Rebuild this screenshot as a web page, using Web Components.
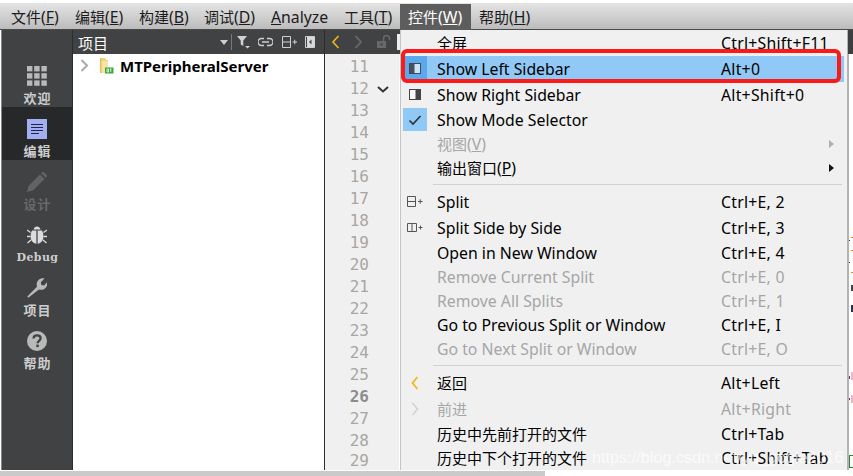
<!DOCTYPE html>
<html lang="zh"><head><meta charset="utf-8"><title>Qt Creator</title>
<style>
html,body{margin:0;padding:0;background:#fff;overflow:hidden}
body{width:853px;height:476px;font-family:"Noto Sans","Noto Sans CJK SC",sans-serif}
svg{display:block}
.c{font-size:15px}
qt-top .l{font-size:15.8px}
</style></head><body>
<qt-app>
  <qt-menubar slot="bar">
    <qt-top w="64">文件<span class="l">(<u>F</u>)</span></qt-top>
    <qt-top w="64">编辑<span class="l">(<u>E</u>)</span></qt-top>
    <qt-top w="65">构建<span class="l">(<u>B</u>)</span></qt-top>
    <qt-top w="67">调试<span class="l">(<u>D</u>)</span></qt-top>
    <qt-top w="73"><span class="l"><u>A</u>nalyze</span></qt-top>
    <qt-top w="64">工具<span class="l">(<u>T</u>)</span></qt-top>
    <qt-top w="71" active>控件<span class="l">(<u>W</u>)</span></qt-top>
    <qt-top w="64">帮助<span class="l">(<u>H</u>)</span></qt-top>
  </qt-menubar>
  <qt-modebar slot="mode">
    <qt-mode label="欢迎"><svg viewBox="0 0 20 20" width="20" height="20" fill="#b9b9b9"><rect x="0" y="0" width="5.4" height="5.4"/><rect x="7.2" y="0" width="5.4" height="5.4"/><rect x="14.4" y="0" width="5.4" height="5.4"/><rect x="0" y="7.2" width="5.4" height="5.4"/><rect x="7.2" y="7.2" width="5.4" height="5.4"/><rect x="14.4" y="7.2" width="5.4" height="5.4"/><rect x="0" y="14.4" width="5.4" height="5.4"/><rect x="7.2" y="14.4" width="5.4" height="5.4"/><rect x="14.4" y="14.4" width="5.4" height="5.4"/></svg></qt-mode>
    <qt-mode label="编辑" selected><svg viewBox="0 0 20 20" width="20" height="20"><rect width="20" height="20" fill="#a3aff0"/><path d="M4 5.5h12M4 8.5h12M4 11.5h12M4 14.5h8" stroke="#1c2550" stroke-width="1.2" fill="none"/></svg></qt-mode>
    <qt-mode label="设计" disabled><svg viewBox="0 0 20 20" width="20" height="20"><path d="M0 20l1.5-6L13 2.5l4.5 4.5L6 18.5z" fill="#626365"/><path d="M14.2 1.3l1-1a1.2 1.2 0 0 1 1.7 0l2.8 2.8a1.2 1.2 0 0 1 0 1.7l-1 1z" fill="#626365"/></svg></qt-mode>
    <qt-mode label="Debug" mono><svg viewBox="0 0 20 20" width="20" height="20" fill="#dcdcdc"><path d="M6.5 4.5C7 2.6 8.4 1.5 10 1.5s3 1.1 3.5 3z"/><path d="M9.4 5.5v13.2C6 18.300 3.600 15.500 3.600 11.500c0-2.500.5-4.700 1.500-6z"/><path d="M10.600 5.500v13.200c3.400-.4 5.800-3.200 5.800-7.200 0-2.500-.5-4.700-1.500-6z"/><path d="M0 5l3.500 2.500M20 5l-3.500 2.500M0 11.500h3.500M20 11.500h-3.500M0.500 18l3.500-3M19.500 18l-3.500-3" stroke="#dcdcdc" stroke-width="1.300" fill="none"/></svg></qt-mode>
    <qt-mode label="项目"><svg viewBox="0 0 20 20" width="20" height="20"><path d="M1.300 19.800L.3 18.600 10 8.700c-.8-2.500-.2-5 1.500-6.700 1.500-1.500 3.800-2.200 6-1.600l-3.700 3.800.6 2.700 2.700.6L20.200 3.900c.5 2.200-.1 4.400-1.700 6-1.700 1.700-4.200 2.300-6.600 1.500z" fill="#b9b9b9"/></svg></qt-mode>
    <qt-mode label="帮助"><svg viewBox="0 0 20 20" width="20" height="20"><circle cx="10" cy="10" r="10" fill="#b9b9b9"/><path d="M6.500 7.600c0-2 1.500-3.300 3.600-3.300s3.500 1.200 3.500 3c0 2.600-3 2.500-3 5" fill="none" stroke="#404244" stroke-width="2.300"/><rect x="9.300" y="13.600" width="2.500" height="2.500" fill="#404244"/></svg></qt-mode>
  </qt-modebar>
  <qt-toolbar slot="tools"></qt-toolbar>
  <qt-tree slot="tree"></qt-tree>
  <qt-gutter slot="gutter"></qt-gutter>
  <qt-menu slot="menu">
    <qt-item key="Ctrl+Shift+F11" h="25"><span class="c">全屏</span></qt-item>
    <qt-item key="Alt+0" h="26" hot><svg slot="icon" viewBox="0 0 12 11" width="12" height="11"><rect x=".5" y=".5" width="11" height="10" fill="#cfe3f6" stroke="#3f4a55" stroke-width="1"/><rect x="1" y="1" width="4.500" height="9" fill="#46525e"/></svg>Show Left Sidebar</qt-item>
    <qt-item key="Alt+Shift+0" h="26"><svg slot="icon" viewBox="0 0 12 11" width="12" height="11"><rect x=".5" y=".5" width="11" height="10" fill="#f8f8f8" stroke="#444" stroke-width="1"/><rect x="6.500" y="1" width="4.500" height="9" fill="#444"/></svg>Show Right Sidebar</qt-item>
    <qt-item h="24" checked><svg slot="icon" viewBox="0 0 14 12" width="14" height="12"><path d="M1.500 6.500l3.500 3.500 7.500-8" fill="none" stroke="#333" stroke-width="1.700"/></svg>Show Mode Selector</qt-item>
    <qt-item h="24" disabled sub><span class="c">视图</span>(<u>V</u>)</qt-item>
    <qt-item h="24" sub><span class="c">输出窗口</span>(<u>P</u>)</qt-item>
    <qt-sep></qt-sep>
    <qt-item key="Ctrl+E, 2" h="26"><svg slot="icon" viewBox="0 0 16 12" width="16" height="12"><path d="M.5 .5h8v10h-8zM.5 5.500h8M11 5.500h4.500M13.250 3.300v4.500" fill="none" stroke="#555" stroke-width="1"/></svg>Split</qt-item>
    <qt-item key="Ctrl+E, 3" h="26"><svg slot="icon" viewBox="0 0 16 12" width="16" height="12"><path d="M.5 1.500h9v8h-9zM5 1.500v8M11.500 5.500h4M13.500 3.500v4" fill="none" stroke="#555" stroke-width="1"/></svg>Split Side by Side</qt-item>
    <qt-item key="Ctrl+E, 4" h="24">Open in New Window</qt-item>
    <qt-item key="Ctrl+E, 0" h="24" disabled>Remove Current Split</qt-item>
    <qt-item key="Ctrl+E, 1" h="24" disabled>Remove All Splits</qt-item>
    <qt-item key="Ctrl+E, I" h="24">Go to Previous Split or Window</qt-item>
    <qt-item key="Ctrl+E, O" h="24" disabled>Go to Next Split or Window</qt-item>
    <qt-sep></qt-sep>
    <qt-item key="Alt+Left" h="26"><svg slot="icon" viewBox="0 0 8 14" width="8" height="14"><path d="M6.500 1L1.500 7l5 6" fill="none" stroke="#f2b71a" stroke-width="1.800"/></svg><span class="c">返回</span></qt-item>
    <qt-item key="Alt+Right" h="26" disabled><svg slot="icon" viewBox="0 0 8 14" width="8" height="14"><path d="M1.500 1l5 6-5 6" fill="none" stroke="#d2d2d2" stroke-width="1.500"/></svg><span class="c">前进</span></qt-item>
    <qt-item key="Ctrl+Tab" h="24"><span class="c">历史中先前打开的文件</span></qt-item>
    <qt-item key="Ctrl+Shift+Tab" h="24"><span class="c">历史中下个打开的文件</span></qt-item>
  </qt-menu>
  <qt-edge slot="edge"></qt-edge>
  <qt-mark slot="mark">https://blog.csdn.net/yq_gogle2016</qt-mark>
</qt-app>
<script>
function def(name,html,init){
  customElements.define(name,class extends HTMLElement{
    constructor(){super();this.attachShadow({mode:'open'}).innerHTML=html;if(init)init(this,this.shadowRoot);}
  });
}
const CJK='"Noto Sans","Noto Sans CJK SC",sans-serif';

def('qt-app',`<style>
:host{display:block;position:relative;width:853px;height:476px;overflow:hidden;background:#fff;font-family:${CJK}}
.col{display:flex;flex-direction:column;height:476px;padding-top:3px;box-sizing:border-box}
.main{display:flex;height:440px}
.right{display:flex;flex-direction:column;width:780px}
.body{display:flex;height:416px}
.foot{margin-top:1px;height:5px;width:545px;background:#cacaca}
.menu{position:absolute;left:400px;top:30px}
.edge{position:absolute;left:847px;top:30px}
.mark{position:absolute;left:592px;top:448px}
</style>
<div class="col">
  <slot name="bar"></slot>
  <div class="main"><slot name="mode"></slot>
    <div class="right"><slot name="tools"></slot>
      <div class="body"><slot name="tree"></slot><slot name="gutter"></slot></div>
    </div>
  </div>
  <div class="foot"></div>
</div>
<div class="edge"><slot name="edge"></slot></div>
<div class="menu"><slot name="menu"></slot></div>
<div class="mark"><slot name="mark"></slot></div>`);

def('qt-menubar',`<style>
:host{display:flex;height:27px;box-sizing:border-box;padding:1px 0 0 3px;background:linear-gradient(#e4e4e4,#bcbcbc);border-bottom:1px solid #4a4a4a}
</style><slot></slot>`);

def('qt-top',`<style>
:host{display:block;height:26px;box-sizing:border-box;padding:0 0 0 8px;font-size:15px;line-height:26px;color:#1c1c1c;white-space:nowrap;flex:none}
:host([active]){background:#5d5d5d;color:#fff}
</style><slot></slot>`,(el)=>{queueMicrotask(()=>{el.style.width=el.getAttribute('w')+'px'})});

def('qt-modebar',`<style>
:host{display:flex;flex-direction:column;width:72px;margin-left:1px;box-sizing:border-box;background:#404244;border-left:1px solid #85878a;border-right:1px solid #2c2c2c;padding-top:24px}
</style><slot></slot>`);

def('qt-mode',`<style>
:host{display:flex;flex-direction:column;align-items:center;height:53px;box-sizing:border-box;padding-top:12px;color:#cdcdcd}
:host([selected]){background:#27282a}
:host([disabled]){color:#68696b}
.l{font:700 13px/14px "Noto Sans CJK SC",sans-serif;margin-top:5px;letter-spacing:1px;margin-right:-1px}
:host([mono]) .l{font:700 11px/14px "DejaVu Serif",serif;letter-spacing:.4px;margin-top:6px}
</style><slot></slot><div class="l"></div>`,(el,s)=>{
  queueMicrotask(()=>{s.querySelector('.l').textContent=el.getAttribute('label')});
});

def('qt-toolbar',`<style>
:host{display:flex;height:24px;background:#404244;color:#fff}
.p{display:flex;align-items:center;width:252px;box-sizing:border-box;padding-left:5px;font-size:15px;border-right:1px solid #2c2c2c}
.t{flex:1}
.e{display:flex;align-items:center;flex:1;position:relative}
.tri{width:0;height:0;border:4.500px solid transparent;border-top:5px solid #cfcfcf;border-bottom:0;margin-right:3px}
.div{width:1px;height:16px;background:#77797b;margin-right:5px}
svg{display:block;flex:none}
.w{width:3px;height:16px;background:#eee;margin-left:6px}
</style>
<div class="p"><span class="t">项目</span><span class="tri"></span><span class="div"></span>
<svg width="13" height="14" viewBox="0 0 13 14" style="margin-right:8px"><path d="M0 1h10L6.300 5.500V11L3.700 9.500V5.500z" fill="#d0d0d0"/><path d="M8 11h5l-2.500 2.500z" fill="#d0d0d0"/></svg>
<svg width="15" height="10" viewBox="0 0 15 10" style="margin-right:9px"><path d="M6 1.500H3.500a3 3 0 0 0 0 7H6M9 1.500h2.500a3 3 0 0 1 0 7H9M4 5h7" fill="none" stroke="#d0d0d0" stroke-width="1.400"/></svg>
<svg width="15" height="12" viewBox="0 0 15 12" style="margin-right:8px"><path d="M.5 .5h8v11h-8zM.5 6h8M10.500 6h4.500M12.750 3.800v4.400" fill="none" stroke="#d0d0d0" stroke-width="1"/></svg>
<svg width="10" height="12" viewBox="0 0 10 12" style="margin-right:9px"><path d="M.5 .5h9v11h-9z" fill="none" stroke="#d0d0d0"/><path d="M2 1h7.500v10H2z" fill="#d8d8d8"/><path d="M6.500 3.500L4 6l2.500 2.500z" fill="#404244"/></svg></div>
<div class="e">
<svg width="9" height="14" viewBox="0 0 9 14" style="margin-left:6px"><path d="M7.500 1L2 7l5.500 6" fill="none" stroke="#e9b51d" stroke-width="1.700"/></svg>
<svg width="9" height="14" viewBox="0 0 9 14" style="margin-left:14px"><path d="M1.500 1L7 7l-5.500 6" fill="none" stroke="#6a6b6d" stroke-width="1.700"/></svg>
<svg width="14" height="14" viewBox="0 0 14 14" style="margin-left:14px"><rect x="0" y="6" width="9" height="7" fill="#66686a"/><path d="M6.500 6V3.500a3 3 0 0 1 6 0V5" fill="none" stroke="#66686a" stroke-width="1.600"/><rect x="3.500" y="8.500" width="2" height="2" fill="#404244"/></svg>
<span class="w"></span></div>`);

def('qt-tree',`<style>
:host{display:flex;align-items:flex-start;width:252px;box-sizing:border-box;padding:3px 0 0 7px;background:#fff;border-right:1px solid #2c2c2c;color:#000}
svg{display:block;flex:none}
b{font:700 15px/18px ${CJK};margin-left:6px}
</style>
<svg width="9" height="13" viewBox="0 0 9 13" style="margin-top:2px"><path d="M1.500 1l5.500 5.500L1.500 12" fill="none" stroke="#a9a9a9" stroke-width="2"/></svg>
<svg width="14" height="16" viewBox="0 0 14 16" style="margin-left:11px;margin-top:1px"><path d="M0 0h5l1.500 2H8v13H0z" fill="#f3d27a"/><path d="M0 3h8v12H0z" fill="#f8e3a4"/><path d="M0 0h1.500v15H0z" fill="#e6bf58"/><rect x="5" y="9.500" width="8.500" height="6" fill="#3aa83a"/><path d="M7 11h1.500v3H7zM10 11h1.500M10.700 11v3" stroke="#fff" stroke-width=".8" fill="none"/></svg>
<b>MTPeripheralServer</b>`);

def('qt-gutter',`<style>
:host{display:block;width:74px;box-sizing:border-box;background:#f0f0f0;overflow:hidden;padding-top:2px}
.n{font:16px/22px "DejaVu Sans Mono",monospace;color:#a9a6a2;width:44px;text-align:right}
.n.c{font-weight:700;color:#8e8c89}
.r{display:flex;height:22px;align-items:center}
.r.last{height:18px;align-items:flex-start}
.r.last .n{line-height:18px}
svg{margin-left:8px;display:block}
</style><div id="w"></div>`,(el,s)=>{
  let h='';
  for(let i=11;i<=29;i++){
    h+=`<div class="r${i==29?' last':''}"><div class="n${i==26?' c':''}">${i}</div>${i==12?'<svg width="12" height="7" viewBox="0 0 12 7"><path d="M1 1l5 4.500L11 1" fill="none" stroke="#333" stroke-width="2"/></svg>':''}</div>`;
  }
  s.getElementById('w').innerHTML=h;
});

def('qt-menu',`<style>
:host{display:block;width:447px;height:440px;box-sizing:border-box;background:#f0f0f0;border-left:1px solid #c4c4c4;padding-top:1px;color:#000;position:relative;overflow:hidden}
.red{position:absolute;left:0;top:19px;width:440px;height:34px;box-sizing:border-box;border:4px solid #fb1a1a;border-radius:6px;pointer-events:none}
</style><slot></slot><div class="red"></div>`);

def('qt-item',`<style>
:host{display:flex;align-items:center;box-sizing:border-box;margin:0 3px 0 2px;padding-bottom:1px;font-size:15.8px;white-space:nowrap;color:#000;position:relative}
:host([disabled]){color:#a6a6a6}
:host([hot]){background:#90c8f6}
.ic{width:24px;height:100%;margin-right:10px;display:flex;align-items:center;justify-content:center;flex:none}
:host([hot]) .ic{background:#5ba9ec}
:host([checked]) .ic{background:#90c8f6}
.tx{width:284px;flex:none}
.k{flex:1;letter-spacing:.25px}
.arr{position:absolute;right:10px;top:50%;margin-top:-4px;width:0;height:0;border:4px solid transparent;border-left:5px solid #111;border-right:0}
:host([disabled]) .arr{border-left-color:#b0b0b0}
</style><span class="ic"><slot name="icon"></slot></span><span class="tx"><slot></slot></span><span class="k"></span>`,(el,s)=>{
  queueMicrotask(()=>{
    el.style.height=(el.getAttribute('h')||24)+'px';
    s.querySelector('.k').textContent=el.getAttribute('key')||'';
    if(el.hasAttribute('sub')){const a=document.createElement('span');a.className='arr';s.appendChild(a);}
  });
});

def('qt-sep',`<style>
:host{display:block;height:9px;box-sizing:border-box;padding:4px 5px 0 32px}
div{height:1px;background:#d2d2d2}
</style><div></div>`);

def('qt-mark',`<style>
:host{display:block;font:16px/20px "Liberation Sans",sans-serif;color:rgba(255,255,255,.72);letter-spacing:.1px;white-space:nowrap;pointer-events:none}
</style><slot></slot>`);

def('qt-edge',`<style>
:host{display:block;width:6px;height:440px;position:relative;background:#fff;overflow:hidden}
.s{position:absolute;left:0;top:0;width:2px;height:100%;background:#b4b4b4}
.d{position:absolute;left:1px;top:0;width:5px;height:24px;background:#3c3e40}
i{position:absolute;display:block}
</style><div class="s"></div><div class="d"></div>
<i style="left:4px;top:207px;width:2px;height:1px;background:#e8862a"></i>
<i style="left:2px;top:210px;width:1px;height:1px;background:#334"></i>
<i style="left:4px;top:220px;width:2px;height:1px;background:#e8862a"></i>
<i style="left:2px;top:232px;width:1px;height:1px;background:#334"></i>
<i style="left:4px;top:242px;width:2px;height:1px;background:#e8862a"></i>
<i style="left:4px;top:255px;width:2px;height:6px;background:#444"></i>
<i style="left:4px;top:275px;width:2px;height:7px;background:#27334f"></i>
<i style="left:4px;top:342px;width:2px;height:8px;background:#f3b3c0"></i>
<i style="left:2px;top:346px;width:1px;height:3px;background:#5a3a8a"></i>
<i style="left:4px;top:365px;width:2px;height:8px;background:#f3b3c0"></i>
<i style="left:2px;top:368px;width:1px;height:2px;background:#5a3a8a"></i>
<i style="left:2px;top:425px;width:4px;height:13px;border:1px solid #2a8a2a;border-right:0;box-sizing:border-box"></i>`);
</script>
</body></html>
